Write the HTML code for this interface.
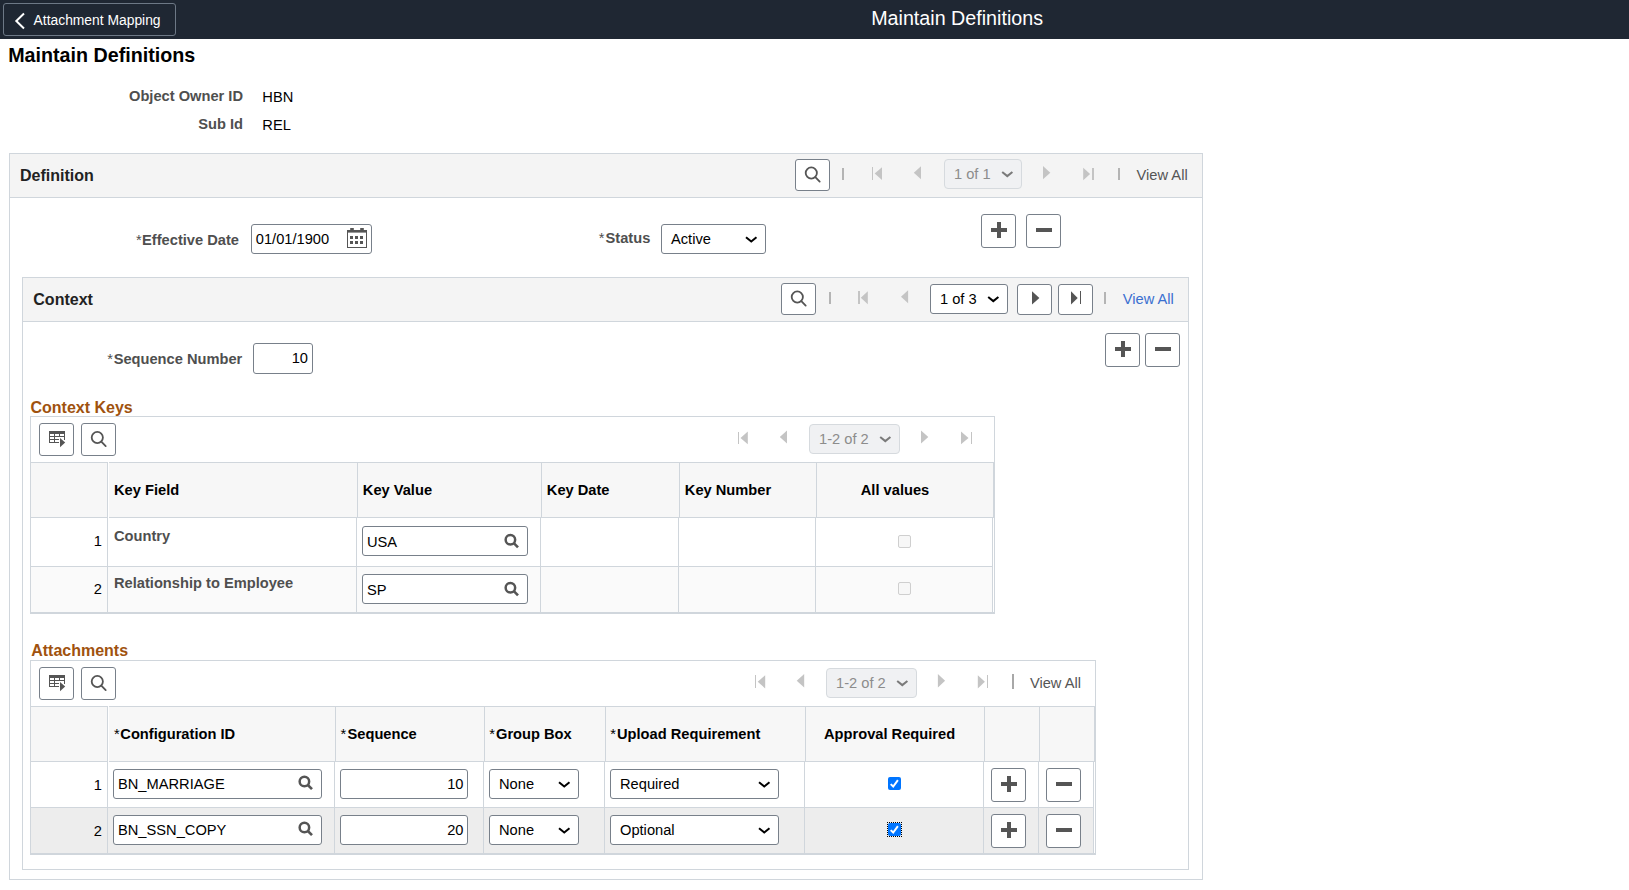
<!DOCTYPE html>
<html><head><meta charset="utf-8"><title>Maintain Definitions</title>
<style>
html,body{margin:0;padding:0;background:#fff;width:1629px;height:890px;overflow:hidden;position:relative}
body>div,body>svg{position:absolute}
.t{position:absolute;white-space:nowrap;line-height:1;font-family:"Liberation Sans",sans-serif}
</style></head><body>
<div style="left:0px;top:0px;width:1629px;height:39px;background:#1f2733"></div>
<div style="left:3px;top:3px;width:173px;height:33px;border:1px solid #6d7886;border-radius:3px;box-sizing:border-box"></div>
<svg style="position:absolute;left:12px;top:10px" width="16" height="22" viewBox="0 0 16 22"><polyline points="12,3.5 4.3,11 12,18.5" fill="none" stroke="#fff" stroke-width="2"/></svg>
<div class="t" style="left:33.6px;top:13.88px;font-size:13.85px;color:#fff;">Attachment Mapping</div>
<div class="t" style="left:871.2px;top:8.93px;font-size:19.7px;color:#fff;">Maintain Definitions</div>
<div class="t" style="left:8.2px;top:45.93px;font-size:19.7px;font-weight:bold;color:#000;">Maintain Definitions</div>
<div class="t" style="right:1386.0px;top:88.99px;font-size:14.667px;font-weight:bold;color:#4f4f4f;">Object Owner ID</div>
<div class="t" style="left:262.3px;top:90.09px;font-size:14.667px;color:#000;">HBN</div>
<div class="t" style="right:1386.0px;top:117.09px;font-size:14.667px;font-weight:bold;color:#4f4f4f;">Sub Id</div>
<div class="t" style="left:262.3px;top:118.19px;font-size:14.667px;color:#000;">REL</div>
<div style="left:9px;top:153px;width:1194px;height:727px;border:1px solid #d0d6dc;box-sizing:border-box;background:#fff"></div>
<div style="left:10px;top:154px;width:1192px;height:43px;background:#f4f4f4"></div>
<div style="left:10px;top:197px;width:1192px;height:1px;background:#d0d6dc"></div>
<div class="t" style="left:20px;top:167.76px;font-size:16px;font-weight:bold;color:#222;">Definition</div>
<div style="left:795px;top:159px;width:35px;height:32px;border:1px solid #78808a;border-radius:3px;background:#fff;box-sizing:border-box"></div>
<svg style="position:absolute;left:801px;top:163px" width="24" height="24" viewBox="0 0 24 24"><circle cx="10.30" cy="10.00" r="5.6" fill="none" stroke="#555" stroke-width="1.8"/><line x1="14.33" y1="14.03" x2="18.70" y2="18.60" stroke="#555" stroke-width="1.8" stroke-linecap="round"/></svg>
<div style="left:842px;top:168px;width:2px;height:12px;background:#b4b4b4"></div>
<div style="left:872.2px;top:167.2px;width:1.3px;height:12.800000000000011px;background:#c4c4c4"></div>
<svg style="position:absolute;left:873px;top:166px" width="11" height="16" viewBox="0 0 11 16"><path d="M1.7000000000000455 7.599999999999994 L9 1.1999999999999886 L9 14 Z" fill="#c4c4c4"/></svg>
<svg style="position:absolute;left:912px;top:165px" width="11" height="16" viewBox="0 0 11 16"><path d="M1.7999999999999545 7.75 L9 1.3000000000000114 L9 14.199999999999989 Z" fill="#c4c4c4"/></svg>
<div style="left:944px;top:159px;width:78px;height:30px;border:1px solid #d6dade;border-radius:4px;background:#f0f1f3;box-sizing:border-box"></div>
<div class="t" style="left:954px;top:167.19px;font-size:14.667px;color:#8c8c8c;">1 of 1</div>
<svg style="position:absolute;left:999px;top:169px" width="18" height="12" viewBox="0 0 18 12"><polyline points="3.20,3.00 8.30,7.10 13.40,3.00" fill="none" stroke="#7a7a7a" stroke-width="2.0"/></svg>
<svg style="position:absolute;left:1042px;top:165px" width="11" height="17" viewBox="0 0 11 17"><path d="M8.299999999999955 7.699999999999989 L1 1.0999999999999943 L1 14.300000000000011 Z" fill="#c4c4c4"/></svg>
<svg style="position:absolute;left:1082px;top:166px" width="10" height="16" viewBox="0 0 10 16"><path d="M8.099999999999909 7.949999999999989 L1.2000000000000455 1.6999999999999886 L1.2000000000000455 14.199999999999989 Z" fill="#c4c4c4"/></svg>
<div style="left:1092.3px;top:167.7px;width:1.3px;height:12.5px;background:#c4c4c4"></div>
<div style="left:1118px;top:168px;width:2px;height:12px;background:#b4b4b4"></div>
<div class="t" style="left:1136.6px;top:168.19px;font-size:14.667px;color:#555;">View All</div>
<div class="t" style="right:1390.0px;top:232.89px;font-size:14.667px;font-weight:bold;color:#4f4f4f;">Effective Date</div>
<div class="t" style="left:136.0px;top:232.89px;font-size:14.667px;color:#4f4f4f;">*</div>
<div style="left:251px;top:224px;width:121px;height:30px;border:1px solid #78808a;border-radius:3px;background:#fff;box-sizing:border-box"></div>
<div class="t" style="left:255.8px;top:231.89px;font-size:14.667px;color:#000;">01/01/1900</div>
<svg style="position:absolute;left:347px;top:228px" width="21" height="21" viewBox="0 0 21 21"><rect x="0" y="2" width="20" height="2.6" fill="#555"/><rect x="0" y="2" width="1" height="18" fill="#555"/><rect x="19" y="2" width="1" height="18" fill="#555"/><rect x="0" y="19" width="20" height="1" fill="#555"/><rect x="3.2" y="0" width="3.6" height="2.5" fill="#555"/><rect x="13.2" y="0" width="3.6" height="2.5" fill="#555"/><rect x="3" y="8" width="3" height="3" fill="#555"/><rect x="3" y="13" width="3" height="3" fill="#555"/><rect x="8" y="8" width="3" height="3" fill="#555"/><rect x="8" y="13" width="3" height="3" fill="#555"/><rect x="13" y="8" width="3" height="3" fill="#555"/><rect x="13" y="13" width="3" height="3" fill="#555"/></svg>
<div class="t" style="right:978.7px;top:231.19px;font-size:14.667px;font-weight:bold;color:#4f4f4f;">Status</div>
<div class="t" style="left:598.7px;top:231.19px;font-size:14.667px;color:#4f4f4f;">*</div>
<div style="left:661px;top:224px;width:105px;height:30px;border:1px solid #78808a;border-radius:3px;background:#fff;box-sizing:border-box"></div>
<div class="t" style="left:671px;top:231.69px;font-size:14.667px;color:#000;">Active</div>
<svg style="position:absolute;left:743px;top:234px" width="18" height="12" viewBox="0 0 18 12"><polyline points="3.02,3.32 8.25,7.46 13.48,3.32" fill="none" stroke="#000" stroke-width="2.05"/></svg>
<div style="left:981px;top:214px;width:35px;height:34px;border:1px solid #78808a;border-radius:3px;background:#fff;box-sizing:border-box"></div>
<div style="left:991.15px;top:228.25px;width:15.7px;height:3.5px;background:#555"></div>
<div style="left:997.2px;top:222.2px;width:3.6px;height:15.6px;background:#555"></div>
<div style="left:1026px;top:214px;width:35px;height:34px;border:1px solid #78808a;border-radius:3px;background:#fff;box-sizing:border-box"></div>
<div style="left:1036.1px;top:228.25px;width:15.8px;height:3.5px;background:#555"></div>
<div style="left:22px;top:277px;width:1167px;height:593px;border:1px solid #d0d6dc;box-sizing:border-box;background:#fff"></div>
<div style="left:23px;top:278px;width:1165px;height:43px;background:#f4f4f4"></div>
<div style="left:23px;top:321px;width:1165px;height:1px;background:#d0d6dc"></div>
<div class="t" style="left:33.3px;top:291.76px;font-size:16px;font-weight:bold;color:#222;">Context</div>
<div style="left:781px;top:283px;width:35px;height:32px;border:1px solid #78808a;border-radius:3px;background:#fff;box-sizing:border-box"></div>
<svg style="position:absolute;left:787px;top:287px" width="24" height="24" viewBox="0 0 24 24"><circle cx="10.30" cy="10.00" r="5.6" fill="none" stroke="#555" stroke-width="1.8"/><line x1="14.33" y1="14.03" x2="18.70" y2="18.60" stroke="#555" stroke-width="1.8" stroke-linecap="round"/></svg>
<div style="left:829px;top:292px;width:2px;height:12px;background:#b4b4b4"></div>
<div style="left:858.3px;top:291.3px;width:1.3px;height:13.0px;background:#c4c4c4"></div>
<svg style="position:absolute;left:859px;top:290px" width="11" height="17" viewBox="0 0 11 17"><path d="M1.7999999999999545 7.800000000000011 L8.799999999999955 1.3000000000000114 L8.799999999999955 14.300000000000011 Z" fill="#c4c4c4"/></svg>
<svg style="position:absolute;left:900px;top:289px" width="11" height="17" viewBox="0 0 11 17"><path d="M1 7.800000000000011 L8.100000000000023 1.3000000000000114 L8.100000000000023 14.300000000000011 Z" fill="#c4c4c4"/></svg>
<div style="left:930px;top:284px;width:78px;height:30px;border:1px solid #78808a;border-radius:3px;background:#fff;box-sizing:border-box"></div>
<div class="t" style="left:940px;top:292.19px;font-size:14.667px;color:#000;">1 of 3</div>
<svg style="position:absolute;left:985px;top:294px" width="18" height="12" viewBox="0 0 18 12"><polyline points="3.20,3.00 8.30,7.10 13.40,3.00" fill="none" stroke="#000" stroke-width="2.0"/></svg>
<div style="left:1017px;top:284px;width:35px;height:31px;border:1px solid #78808a;border-radius:3px;background:#fff;box-sizing:border-box"></div>
<svg style="position:absolute;left:1031px;top:290px" width="11" height="17" viewBox="0 0 11 17"><path d="M8.400000000000091 7.899999999999977 L1 1.3000000000000114 L1 14.5 Z" fill="#555"/></svg>
<div style="left:1058px;top:284px;width:35px;height:31px;border:1px solid #78808a;border-radius:3px;background:#fff;box-sizing:border-box"></div>
<svg style="position:absolute;left:1070px;top:290px" width="10" height="17" viewBox="0 0 10 17"><path d="M7.7000000000000455 7.899999999999977 L1 1.3000000000000114 L1 14.5 Z" fill="#555"/></svg>
<div style="left:1079.9px;top:291.3px;width:1.3px;height:13.199999999999989px;background:#555"></div>
<div style="left:1104px;top:292px;width:2px;height:12px;background:#b4b4b4"></div>
<div class="t" style="left:1122.8px;top:291.79px;font-size:14.667px;color:#3a6fd0;">View All</div>
<div class="t" style="right:1386.7px;top:351.99px;font-size:14.667px;font-weight:bold;color:#4f4f4f;">Sequence Number</div>
<div class="t" style="left:107.3px;top:351.99px;font-size:14.667px;color:#4f4f4f;">*</div>
<div style="left:253px;top:343px;width:60px;height:31px;border:1px solid #78808a;border-radius:3px;background:#fff;box-sizing:border-box"></div>
<div class="t" style="right:1321.0px;top:351.29px;font-size:14.667px;color:#000;">10</div>
<div style="left:1105px;top:333px;width:35px;height:34px;border:1px solid #78808a;border-radius:3px;background:#fff;box-sizing:border-box"></div>
<div style="left:1115.15px;top:347.25px;width:15.7px;height:3.5px;background:#555"></div>
<div style="left:1121.2px;top:341.2px;width:3.6px;height:15.6px;background:#555"></div>
<div style="left:1145px;top:333px;width:35px;height:34px;border:1px solid #78808a;border-radius:3px;background:#fff;box-sizing:border-box"></div>
<div style="left:1155.1px;top:347.25px;width:15.8px;height:3.5px;background:#555"></div>
<div class="t" style="left:30.5px;top:399.66px;font-size:16px;font-weight:bold;color:#a0520e;">Context Keys</div>
<div style="left:30px;top:416px;width:965px;height:198px;border:1px solid #d0d6dc;box-sizing:border-box;background:#fff"></div>
<div style="left:39px;top:423px;width:35px;height:33px;border:1px solid #78808a;border-radius:3px;background:#fff;box-sizing:border-box"></div>
<svg style="position:absolute;left:49px;top:431px" width="17" height="17" viewBox="0 0 17 17"><rect x="0" y="0" width="16" height="3" fill="#555"/><rect x="0" y="0" width="1" height="12" fill="#555"/><rect x="5" y="0" width="1" height="12" fill="#555"/><rect x="10" y="0" width="1" height="6" fill="#555"/><rect x="15" y="0" width="1" height="9" fill="#555"/><rect x="0" y="5" width="16" height="1" fill="#555"/><rect x="0" y="8" width="10" height="1" fill="#555"/><rect x="0" y="11" width="10" height="1" fill="#555"/><path d="M11 7 L16.2 11.6 L11 16.2 Z" fill="#555"/></svg>
<div style="left:81px;top:423px;width:35px;height:33px;border:1px solid #78808a;border-radius:3px;background:#fff;box-sizing:border-box"></div>
<svg style="position:absolute;left:87px;top:427px" width="24" height="24" viewBox="0 0 24 24"><circle cx="10.30" cy="10.50" r="5.6" fill="none" stroke="#555" stroke-width="1.8"/><line x1="14.33" y1="14.53" x2="18.70" y2="19.10" stroke="#555" stroke-width="1.8" stroke-linecap="round"/></svg>
<div style="left:738px;top:431.5px;width:1.3px;height:12.800000000000011px;background:#c4c4c4"></div>
<svg style="position:absolute;left:739px;top:430px" width="11" height="16" viewBox="0 0 11 16"><path d="M1.5 7.899999999999977 L8.799999999999955 1.5 L8.799999999999955 14.300000000000011 Z" fill="#c4c4c4"/></svg>
<svg style="position:absolute;left:778px;top:429px" width="11" height="17" viewBox="0 0 11 17"><path d="M1.7999999999999545 8.0 L9 1.5 L9 14.5 Z" fill="#c4c4c4"/></svg>
<div style="left:809px;top:424px;width:91px;height:30px;border:1px solid #d6dade;border-radius:4px;background:#f0f1f3;box-sizing:border-box"></div>
<div class="t" style="left:819px;top:432.19px;font-size:14.667px;color:#8c8c8c;">1-2 of 2</div>
<svg style="position:absolute;left:877px;top:434px" width="18" height="12" viewBox="0 0 18 12"><polyline points="3.20,3.00 8.30,7.10 13.40,3.00" fill="none" stroke="#7a7a7a" stroke-width="2.0"/></svg>
<svg style="position:absolute;left:920px;top:429px" width="11" height="17" viewBox="0 0 11 17"><path d="M8.299999999999955 8.0 L1 1.5 L1 14.5 Z" fill="#c4c4c4"/></svg>
<svg style="position:absolute;left:960px;top:430px" width="11" height="16" viewBox="0 0 11 16"><path d="M8.5 7.899999999999977 L1 1.5 L1 14.300000000000011 Z" fill="#c4c4c4"/></svg>
<div style="left:970.7px;top:431.5px;width:1.3px;height:12.800000000000011px;background:#c4c4c4"></div>
<div style="left:31px;top:463px;width:76px;height:54px;background:#f7f7f7"></div>
<div style="left:109px;top:463px;width:884px;height:54px;background:#f7f7f7"></div>
<div style="left:30px;top:462px;width:78px;height:1px;background:#d0d6dc"></div>
<div style="left:109px;top:462px;width:885px;height:1px;background:#d0d6dc"></div>
<div style="left:30px;top:517px;width:78px;height:1px;background:#d0d6dc"></div>
<div style="left:109px;top:517px;width:885px;height:1px;background:#d0d6dc"></div>
<div style="left:107px;top:463px;width:1px;height:55px;background:#d0d6dc"></div>
<div style="left:357px;top:463px;width:1px;height:55px;background:#d0d6dc"></div>
<div style="left:541px;top:463px;width:1px;height:55px;background:#d0d6dc"></div>
<div style="left:679px;top:463px;width:1px;height:55px;background:#d0d6dc"></div>
<div style="left:816px;top:463px;width:1px;height:55px;background:#d0d6dc"></div>
<div style="left:993px;top:463px;width:1px;height:55px;background:#d0d6dc"></div>
<div style="left:31px;top:518px;width:961px;height:48px;background:#fff"></div>
<div style="left:30px;top:566px;width:963px;height:1px;background:#d0d6dc"></div>
<div style="left:31px;top:567px;width:961px;height:45px;background:#fafafa"></div>
<div style="left:107px;top:518px;width:1px;height:95px;background:#d0d6dc"></div>
<div style="left:356px;top:518px;width:1px;height:95px;background:#d0d6dc"></div>
<div style="left:540px;top:518px;width:1px;height:95px;background:#d0d6dc"></div>
<div style="left:678px;top:518px;width:1px;height:95px;background:#d0d6dc"></div>
<div style="left:815px;top:518px;width:1px;height:95px;background:#d0d6dc"></div>
<div style="left:992px;top:518px;width:1px;height:95px;background:#d0d6dc"></div>
<div style="left:30px;top:462px;width:1px;height:152px;background:#d0d6dc"></div>
<div style="left:30px;top:612px;width:965px;height:2px;background:#d0d6dc"></div>
<div class="t" style="left:114px;top:483.39px;font-size:14.667px;font-weight:bold;color:#000;">Key Field</div>
<div class="t" style="left:362.8px;top:483.39px;font-size:14.667px;font-weight:bold;color:#000;">Key Value</div>
<div class="t" style="left:546.8px;top:483.39px;font-size:14.667px;font-weight:bold;color:#000;">Key Date</div>
<div class="t" style="left:684.8px;top:483.39px;font-size:14.667px;font-weight:bold;color:#000;">Key Number</div>
<div class="t" style="left:595px;width:600px;text-align:center;top:483.39px;font-size:14.667px;font-weight:bold;color:#000;">All values</div>
<div class="t" style="right:1527.2px;top:534.39px;font-size:14.667px;color:#000;">1</div>
<div class="t" style="right:1527.2px;top:582.19px;font-size:14.667px;color:#000;">2</div>
<div class="t" style="left:114px;top:528.99px;font-size:14.667px;font-weight:bold;color:#4f4f4f;">Country</div>
<div class="t" style="left:114px;top:575.89px;font-size:14.667px;font-weight:bold;color:#4f4f4f;">Relationship to Employee</div>
<div style="left:362px;top:526px;width:166px;height:30px;border:1px solid #78808a;border-radius:3px;background:#fff;box-sizing:border-box"></div>
<div class="t" style="left:367px;top:534.69px;font-size:14.667px;color:#000;">USA</div>
<svg style="position:absolute;left:500px;top:529px" width="24" height="24" viewBox="0 0 24 24"><circle cx="10.40" cy="10.70" r="4.75" fill="none" stroke="#555" stroke-width="2.5"/><line x1="13.82" y1="14.12" x2="18.00" y2="18.30" stroke="#555" stroke-width="2.6" stroke-linecap="butt"/></svg>
<div style="left:362px;top:574px;width:166px;height:30px;border:1px solid #78808a;border-radius:3px;background:#fff;box-sizing:border-box"></div>
<div class="t" style="left:367px;top:582.69px;font-size:14.667px;color:#000;">SP</div>
<svg style="position:absolute;left:500px;top:577px" width="24" height="24" viewBox="0 0 24 24"><circle cx="10.40" cy="10.70" r="4.75" fill="none" stroke="#555" stroke-width="2.5"/><line x1="13.82" y1="14.12" x2="18.00" y2="18.30" stroke="#555" stroke-width="2.6" stroke-linecap="butt"/></svg>
<div style="left:898px;top:535px;width:13px;height:13px;border:1px solid #cfcfcf;border-radius:2px;background:#f7f7f7;box-sizing:border-box"></div>
<div style="left:898px;top:582px;width:13px;height:13px;border:1px solid #cfcfcf;border-radius:2px;background:#f7f7f7;box-sizing:border-box"></div>
<div class="t" style="left:31.2px;top:643.26px;font-size:16px;font-weight:bold;color:#a0520e;">Attachments</div>
<div style="left:30px;top:660px;width:1066px;height:195px;border:1px solid #d0d6dc;box-sizing:border-box;background:#fff"></div>
<div style="left:39px;top:667px;width:35px;height:33px;border:1px solid #78808a;border-radius:3px;background:#fff;box-sizing:border-box"></div>
<svg style="position:absolute;left:49px;top:675px" width="17" height="17" viewBox="0 0 17 17"><rect x="0" y="0" width="16" height="3" fill="#555"/><rect x="0" y="0" width="1" height="12" fill="#555"/><rect x="5" y="0" width="1" height="12" fill="#555"/><rect x="10" y="0" width="1" height="6" fill="#555"/><rect x="15" y="0" width="1" height="9" fill="#555"/><rect x="0" y="5" width="16" height="1" fill="#555"/><rect x="0" y="8" width="10" height="1" fill="#555"/><rect x="0" y="11" width="10" height="1" fill="#555"/><path d="M11 7 L16.2 11.6 L11 16.2 Z" fill="#555"/></svg>
<div style="left:81px;top:667px;width:35px;height:33px;border:1px solid #78808a;border-radius:3px;background:#fff;box-sizing:border-box"></div>
<svg style="position:absolute;left:87px;top:671px" width="24" height="24" viewBox="0 0 24 24"><circle cx="10.30" cy="10.50" r="5.6" fill="none" stroke="#555" stroke-width="1.8"/><line x1="14.33" y1="14.53" x2="18.70" y2="19.10" stroke="#555" stroke-width="1.8" stroke-linecap="round"/></svg>
<div style="left:755.2px;top:675.2px;width:1.3px;height:13.199999999999932px;background:#c4c4c4"></div>
<svg style="position:absolute;left:756px;top:674px" width="11" height="17" viewBox="0 0 11 17"><path d="M1.7000000000000455 7.7999999999999545 L9.200000000000045 1.2000000000000455 L9.200000000000045 14.399999999999977 Z" fill="#c4c4c4"/></svg>
<svg style="position:absolute;left:795px;top:673px" width="11" height="17" viewBox="0 0 11 17"><path d="M1.7000000000000455 7.75 L9.200000000000045 1 L9.200000000000045 14.5 Z" fill="#c4c4c4"/></svg>
<div style="left:826px;top:668px;width:91px;height:30px;border:1px solid #d6dade;border-radius:4px;background:#f0f1f3;box-sizing:border-box"></div>
<div class="t" style="left:836px;top:676.19px;font-size:14.667px;color:#8c8c8c;">1-2 of 2</div>
<svg style="position:absolute;left:894px;top:678px" width="18" height="12" viewBox="0 0 18 12"><polyline points="3.20,3.00 8.30,7.10 13.40,3.00" fill="none" stroke="#7a7a7a" stroke-width="2.0"/></svg>
<svg style="position:absolute;left:936px;top:673px" width="11" height="17" viewBox="0 0 11 17"><path d="M9.100000000000023 7.75 L1.8999999999999773 1 L1.8999999999999773 14.5 Z" fill="#c4c4c4"/></svg>
<svg style="position:absolute;left:976px;top:674px" width="11" height="17" viewBox="0 0 11 17"><path d="M8.899999999999977 7.7999999999999545 L1.7999999999999545 1.2000000000000455 L1.7999999999999545 14.399999999999977 Z" fill="#c4c4c4"/></svg>
<div style="left:987.1px;top:675.2px;width:1.3px;height:13.199999999999932px;background:#c4c4c4"></div>
<div style="left:1012px;top:674px;width:2px;height:15px;background:#a8a8a8"></div>
<div class="t" style="left:1029.9px;top:675.99px;font-size:14.667px;color:#555;">View All</div>
<div style="left:31px;top:707px;width:76px;height:54px;background:#f7f7f7"></div>
<div style="left:109px;top:707px;width:985px;height:54px;background:#f7f7f7"></div>
<div style="left:30px;top:706px;width:78px;height:1px;background:#d0d6dc"></div>
<div style="left:109px;top:706px;width:986px;height:1px;background:#d0d6dc"></div>
<div style="left:30px;top:761px;width:78px;height:1px;background:#d0d6dc"></div>
<div style="left:109px;top:761px;width:986px;height:1px;background:#d0d6dc"></div>
<div style="left:107px;top:707px;width:1px;height:55px;background:#d0d6dc"></div>
<div style="left:335px;top:707px;width:1px;height:55px;background:#d0d6dc"></div>
<div style="left:484px;top:707px;width:1px;height:55px;background:#d0d6dc"></div>
<div style="left:605px;top:707px;width:1px;height:55px;background:#d0d6dc"></div>
<div style="left:805px;top:707px;width:1px;height:55px;background:#d0d6dc"></div>
<div style="left:984px;top:707px;width:1px;height:55px;background:#d0d6dc"></div>
<div style="left:1039px;top:707px;width:1px;height:55px;background:#d0d6dc"></div>
<div style="left:1094px;top:707px;width:1px;height:55px;background:#d0d6dc"></div>
<div style="left:31px;top:762px;width:1062px;height:45px;background:#fff"></div>
<div style="left:30px;top:807px;width:1064px;height:1px;background:#d0d6dc"></div>
<div style="left:31px;top:808px;width:1062px;height:45px;background:#ededed"></div>
<div style="left:107px;top:762px;width:1px;height:92px;background:#d0d6dc"></div>
<div style="left:334px;top:762px;width:1px;height:92px;background:#d0d6dc"></div>
<div style="left:483px;top:762px;width:1px;height:92px;background:#d0d6dc"></div>
<div style="left:604px;top:762px;width:1px;height:92px;background:#d0d6dc"></div>
<div style="left:804px;top:762px;width:1px;height:92px;background:#d0d6dc"></div>
<div style="left:983px;top:762px;width:1px;height:92px;background:#d0d6dc"></div>
<div style="left:1038px;top:762px;width:1px;height:92px;background:#d0d6dc"></div>
<div style="left:1093px;top:762px;width:1px;height:92px;background:#d0d6dc"></div>
<div style="left:30px;top:706px;width:1px;height:149px;background:#d0d6dc"></div>
<div style="left:30px;top:853px;width:1066px;height:2px;background:#d0d6dc"></div>
<div class="t" style="left:120.3px;top:727.19px;font-size:14.667px;font-weight:bold;color:#000;">Configuration ID</div>
<div class="t" style="left:114.1px;top:727.19px;font-size:14.667px;color:#000;">*</div>
<div class="t" style="left:347.5px;top:727.19px;font-size:14.667px;font-weight:bold;color:#000;">Sequence</div>
<div class="t" style="left:340.6px;top:727.19px;font-size:14.667px;color:#000;">*</div>
<div class="t" style="left:496px;top:727.19px;font-size:14.667px;font-weight:bold;color:#000;">Group Box</div>
<div class="t" style="left:489.2px;top:727.19px;font-size:14.667px;color:#000;">*</div>
<div class="t" style="left:617px;top:727.19px;font-size:14.667px;font-weight:bold;color:#000;">Upload Requirement</div>
<div class="t" style="left:610.3px;top:727.19px;font-size:14.667px;color:#000;">*</div>
<div class="t" style="left:589.6px;width:600px;text-align:center;top:727.19px;font-size:14.667px;font-weight:bold;color:#000;">Approval Required</div>
<div class="t" style="right:1527.2px;top:777.69px;font-size:14.667px;color:#000;">1</div>
<div style="left:113px;top:769px;width:209px;height:30px;border:1px solid #78808a;border-radius:3px;background:#fff;box-sizing:border-box"></div>
<div class="t" style="left:118px;top:777.19px;font-size:14.667px;color:#000;">BN_MARRIAGE</div>
<svg style="position:absolute;left:294px;top:771px" width="24" height="24" viewBox="0 0 24 24"><circle cx="10.40" cy="10.55" r="4.75" fill="none" stroke="#555" stroke-width="2.5"/><line x1="13.82" y1="13.97" x2="18.00" y2="18.15" stroke="#555" stroke-width="2.6" stroke-linecap="butt"/></svg>
<div style="left:340px;top:769px;width:128px;height:30px;border:1px solid #78808a;border-radius:3px;background:#fff;box-sizing:border-box"></div>
<div class="t" style="right:1165.5px;top:777.19px;font-size:14.667px;color:#000;">10</div>
<div style="left:489px;top:769px;width:90px;height:30px;border:1px solid #78808a;border-radius:3px;background:#fff;box-sizing:border-box"></div>
<div class="t" style="left:499px;top:776.69px;font-size:14.667px;color:#000;">None</div>
<svg style="position:absolute;left:556px;top:779px" width="18" height="12" viewBox="0 0 18 12"><polyline points="3.02,3.32 8.25,7.46 13.48,3.32" fill="none" stroke="#000" stroke-width="2.05"/></svg>
<div style="left:610px;top:769px;width:169px;height:30px;border:1px solid #78808a;border-radius:3px;background:#fff;box-sizing:border-box"></div>
<div class="t" style="left:620px;top:776.69px;font-size:14.667px;color:#000;">Required</div>
<svg style="position:absolute;left:756px;top:779px" width="18" height="12" viewBox="0 0 18 12"><polyline points="3.02,3.32 8.25,7.46 13.48,3.32" fill="none" stroke="#000" stroke-width="2.05"/></svg>
<div style="left:888px;top:777px;width:13px;height:13px;background:#0075ff;border-radius:2px"></div>
<svg style="position:absolute;left:888px;top:777px" width="13" height="13" viewBox="0 0 13 13"><polyline points="2.7,7.1 5.2,9.5 9.9,3.2" fill="none" stroke="#fff" stroke-width="2"/></svg>
<div style="left:991px;top:768px;width:35px;height:34px;border:1px solid #78808a;border-radius:3px;background:#fff;box-sizing:border-box"></div>
<div style="left:1001.15px;top:782.25px;width:15.7px;height:3.5px;background:#555"></div>
<div style="left:1007.2px;top:776.2px;width:3.6px;height:15.6px;background:#555"></div>
<div style="left:1046px;top:768px;width:35px;height:34px;border:1px solid #78808a;border-radius:3px;background:#fff;box-sizing:border-box"></div>
<div style="left:1056.1px;top:782.25px;width:15.8px;height:3.5px;background:#555"></div>
<div class="t" style="right:1527.2px;top:823.69px;font-size:14.667px;color:#000;">2</div>
<div style="left:113px;top:815px;width:209px;height:30px;border:1px solid #78808a;border-radius:3px;background:#fff;box-sizing:border-box"></div>
<div class="t" style="left:118px;top:823.19px;font-size:14.667px;color:#000;">BN_SSN_COPY</div>
<svg style="position:absolute;left:294px;top:817px" width="24" height="24" viewBox="0 0 24 24"><circle cx="10.40" cy="10.55" r="4.75" fill="none" stroke="#555" stroke-width="2.5"/><line x1="13.82" y1="13.97" x2="18.00" y2="18.15" stroke="#555" stroke-width="2.6" stroke-linecap="butt"/></svg>
<div style="left:340px;top:815px;width:128px;height:30px;border:1px solid #78808a;border-radius:3px;background:#fff;box-sizing:border-box"></div>
<div class="t" style="right:1165.5px;top:823.19px;font-size:14.667px;color:#000;">20</div>
<div style="left:489px;top:815px;width:90px;height:30px;border:1px solid #78808a;border-radius:3px;background:#fff;box-sizing:border-box"></div>
<div class="t" style="left:499px;top:822.69px;font-size:14.667px;color:#000;">None</div>
<svg style="position:absolute;left:556px;top:825px" width="18" height="12" viewBox="0 0 18 12"><polyline points="3.02,3.32 8.25,7.46 13.48,3.32" fill="none" stroke="#000" stroke-width="2.05"/></svg>
<div style="left:610px;top:815px;width:169px;height:30px;border:1px solid #78808a;border-radius:3px;background:#fff;box-sizing:border-box"></div>
<div class="t" style="left:620px;top:822.69px;font-size:14.667px;color:#000;">Optional</div>
<svg style="position:absolute;left:756px;top:825px" width="18" height="12" viewBox="0 0 18 12"><polyline points="3.02,3.32 8.25,7.46 13.48,3.32" fill="none" stroke="#000" stroke-width="2.05"/></svg>
<div style="left:888px;top:823px;width:13px;height:13px;background:#0075ff;border-radius:2px"></div>
<svg style="position:absolute;left:888px;top:823px" width="13" height="13" viewBox="0 0 13 13"><polyline points="2.7,7.1 5.2,9.5 9.9,3.2" fill="none" stroke="#fff" stroke-width="2"/></svg>
<div style="left:991px;top:814px;width:35px;height:34px;border:1px solid #78808a;border-radius:3px;background:#fff;box-sizing:border-box"></div>
<div style="left:1001.15px;top:828.25px;width:15.7px;height:3.5px;background:#555"></div>
<div style="left:1007.2px;top:822.2px;width:3.6px;height:15.6px;background:#555"></div>
<div style="left:1046px;top:814px;width:35px;height:34px;border:1px solid #78808a;border-radius:3px;background:#fff;box-sizing:border-box"></div>
<div style="left:1056.1px;top:828.25px;width:15.8px;height:3.5px;background:#555"></div>
<div style="left:887px;top:822px;width:15px;height:15px;border:1px dotted #000;box-sizing:border-box"></div>
</body></html>
